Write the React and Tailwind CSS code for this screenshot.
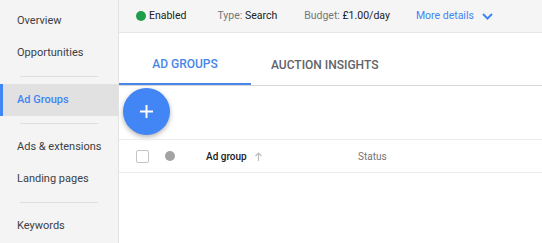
const navTop = ['Overview', 'Opportunities'];
const navMid = ['Ads & extensions', 'Landing pages'];

function NavItem({ label, active }) {
  return (
    <div
      className={[
        'relative flex h-8 items-center whitespace-nowrap pl-[17px] text-[11px]',
        active ? 'bg-[#e1e1e1] font-medium text-[#4285f4]' : 'text-[#3c4043]',
      ].join(' ')}
    >
      {active && <span className="absolute left-0 top-0 h-full w-[3px] bg-[#4285f4]" />}
      {label}
    </div>
  );
}

function Divider() {
  return <div className="mx-5 my-[7px] h-px bg-[#dedede]" />;
}

function Sidebar() {
  return (
    <aside className="w-[119px] shrink-0 border-r border-[#e3e3e3] bg-[#f4f4f4] pt-[5px]">
      {navTop.map((l) => (
        <NavItem key={l} label={l} />
      ))}
      <Divider />
      <NavItem label="Ad Groups" active />
      <Divider />
      {navMid.map((l) => (
        <NavItem key={l} label={l} />
      ))}
      <Divider />
      <NavItem label="Keywords" />
    </aside>
  );
}

function TopBar() {
  return (
    <div className="flex h-[33px] items-center border-b border-[#e6e6e6] bg-[#f5f5f5] pl-[17px] text-[10.5px] text-[#202124]">
      <span className="h-[10px] w-[10px] rounded-full bg-[#1e9e4a]" />
      <span className="ml-[3px]">Enabled</span>
      <span className="ml-[31px]">
        <span className="text-[#757575]">Type: </span>Search
      </span>
      <span className="ml-[27px]">
        <span className="text-[#757575]">Budget: </span>£1.00/day
      </span>
      <span className="ml-[26px] text-[#4285f4]">More details</span>
      <svg className="ml-[8px]" width="11" height="7" viewBox="0 0 11 7" fill="none">
        <polyline points="1,1 5.5,5.5 10,1" stroke="#4285f4" strokeWidth="2" />
      </svg>
    </div>
  );
}

function Tabs() {
  return (
    <div className="flex h-[53px] border-b border-[#d6d6d6] text-[12px] font-medium">
      <div className="flex w-[132px] items-center justify-center border-b-2 border-[#4a86e8] pt-[11px] text-[#4a86e8]">
        AD GROUPS
      </div>
      <div className="flex items-center pl-[20px] pt-[11px] text-[#5f6368]">AUCTION INSIGHTS</div>
    </div>
  );
}

function TableHeader() {
  return (
    <div className="flex h-[34px] items-center border-y border-[#ebebeb] pl-[17px] text-[10px]">
      <span className="h-[13px] w-[13px] rounded-[2px] border border-[#c4c4c4] bg-white" />
      <span className="ml-[16px] h-[10px] w-[10px] rounded-full bg-[#a3a3a3]" />
      <div className="ml-[31px] flex w-[152px] items-center font-medium text-[#202124]">
        Ad group
        <svg className="ml-[8px]" width="7" height="9" viewBox="0 0 7 9" fill="none">
          <path d="M3.5 9V1M0.5 4L3.5 1L6.5 4" stroke="#bdbdbd" strokeWidth="1.2" />
        </svg>
      </div>
      <span className="text-[#757575]">Status</span>
    </div>
  );
}

export default function App() {
  return (
    <div className="flex h-[243px] w-[542px] overflow-hidden bg-white font-['Roboto',sans-serif]">
      <Sidebar />
      <main className="flex-1">
        <TopBar />
        <Tabs />
        <div className="h-[53px] pl-[4px] pt-[2px]">
          <button className="flex h-[47px] w-[47px] items-center justify-center rounded-full bg-[#4285f4] shadow-[0_2px_5px_rgba(0,0,0,0.3)]">
            <svg width="13" height="13" viewBox="0 0 13 13">
              <path d="M6.5 0V13M0 6.5H13" stroke="white" strokeWidth="2" />
            </svg>
          </button>
        </div>
        <TableHeader />
      </main>
    </div>
  );
}
